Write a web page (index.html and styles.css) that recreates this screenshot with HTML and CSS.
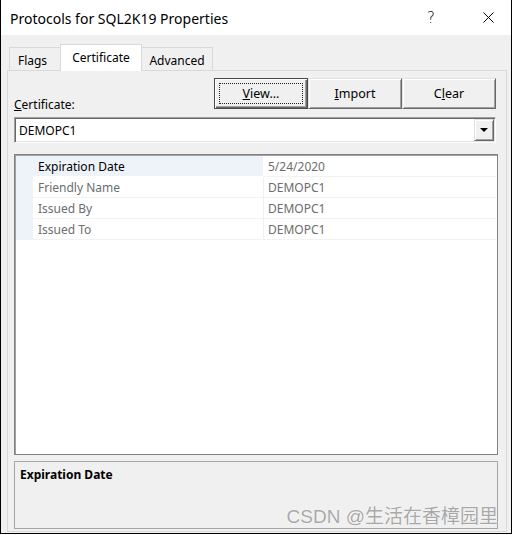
FILE: index.html
```html
<!DOCTYPE html>
<html>
<head>
<meta charset="utf-8">
<title>Protocols for SQL2K19 Properties</title>
<link rel="stylesheet" href="styles.css">
</head>
<body>
<div class="window">
  <div class="titlebar">
    <span class="title">Protocols for SQL2K19 Properties</span>
    <span class="help">?</span>
    <span class="close"><svg width="11" height="11" viewBox="0 0 11 11"><path d="M0.5 0.5L10.5 10.5M10.5 0.5L0.5 10.5" stroke="#000" stroke-width="1" fill="none"/></svg></span>
  </div>
  <div class="client">
    <div class="tabs">
      <div class="tab tab-flags">Flags</div>
      <div class="tab tab-cert active">Certificate</div>
      <div class="tab tab-adv">Advanced</div>
    </div>
    <div class="panel">
      <div class="toprow">
        <span class="label"><u>C</u>ertificate:</span>
        <div class="buttons">
          <div class="btn default"><span class="focus"><u>V</u>iew...</span></div>
          <div class="btn"><u>I</u>mport</div>
          <div class="btn">C<u>l</u>ear</div>
        </div>
      </div>
      <div class="combo">
        <span class="combo-text">DEMOPC1</span>
        <span class="drop"><svg width="8" height="4" viewBox="0 0 8 4"><path d="M0 0H8L4 4Z" fill="#000"/></svg></span>
      </div>
      <div class="list">
        <div class="row sel"><div class="gut"></div><div class="name">Expiration Date</div><div class="val">5/24/2020</div></div>
        <div class="row"><div class="gut"></div><div class="name">Friendly Name</div><div class="val">DEMOPC1</div></div>
        <div class="row"><div class="gut"></div><div class="name">Issued By</div><div class="val">DEMOPC1</div></div>
        <div class="row"><div class="gut"></div><div class="name">Issued To</div><div class="val">DEMOPC1</div></div>
      </div>
      <div class="desc">Expiration Date</div>
    </div>
  </div>
  <div class="watermark">CSDN @生活在香樟园里</div>
</div>
</body>
</html>
```
FILE: styles.css
```css
html, body {
  margin: 0;
  padding: 0;
  background: #ffffff;
}
body {
  font-family: "Noto Sans", "Open Sans", sans-serif;
  font-size: 12px;
  color: #000;
}
.window {
  position: relative;
  width: 512px;
  height: 534px;
  box-sizing: border-box;
  border: 1px solid #000;
  border-top: none;
  display: flex;
  flex-direction: column;
  background: #f0f0f0;
}
.titlebar {
  height: 35px;
  flex: none;
  background: #fff;
  display: flex;
  align-items: center;
}
.title {
  padding-left: 9px;
  font-size: 14px;
  color: #000;
  padding-top: 1px;
}
.help {
  margin-left: auto;
  width: 20px;
  margin-right: 24px;
  text-align: center;
  font-size: 15px;
  font-family: "DejaVu Sans", sans-serif;
  font-weight: 200;
  color: #000;
}
.close {
  width: 46px;
  height: 35px;
  display: flex;
  align-items: center;
  justify-content: center;
}
.client {
  flex: 1;
  padding-top: 9px;
  display: flex;
  flex-direction: column;
}
.tabs {
  display: flex;
  align-items: flex-start;
  height: 27px;
  margin-left: 8px;
  margin-bottom: -1px;
  position: relative;
  z-index: 1;
}
.tab {
  box-sizing: border-box;
  height: 23px;
  margin-top: 3px;
  border: 1px solid #d9d9d9;
  border-bottom: none;
  background: #f0f0f0;
  display: flex;
  align-items: center;
  justify-content: center;
  padding-top: 2px;
}
.tab-flags { width: 52px; padding-right: 5px; }
.tab-cert { width: 82px; margin-left: -1px; }
.tab-adv { width: 72px; margin-left: -1px; }
.tab.active {
  height: 27px;
  margin-top: 0;
  background: #fff;
  position: relative;
  z-index: 2;
  padding-top: 0;
  padding-bottom: 2px;
}
.panel {
  box-sizing: border-box;
  margin-left: 6px;
  width: 500px;
  height: 462px;
  border: 1px solid #d9d9d9;
  background: #f0f0f0;
  padding: 7px 8px 0 6px;
  display: flex;
  flex-direction: column;
}
.toprow {
  display: flex;
  align-items: flex-end;
  height: 31px;
  margin-right: 2px;
}
.label {
  line-height: 15px;
  margin-bottom: -3px;
}
.buttons {
  margin-left: auto;
  display: flex;
}
.btn {
  box-sizing: border-box;
  width: 94px;
  height: 31px;
  background: #f0f0f0;
  border: 1px solid;
  border-color: #e3e3e3 #696969 #696969 #e3e3e3;
  box-shadow: inset 1px 1px 0 #fff, inset -1px -1px 0 #a0a0a0;
  display: flex;
  align-items: center;
  justify-content: center;
  padding-bottom: 1px;
  font-size: 12.5px;
}
.btn.default {
  border: 1px solid #4a4a4a;
  box-shadow: inset 1px 1px 0 #fff, inset -1px -1px 0 #696969, inset -2px -2px 0 #a0a0a0;
  padding: 4px;
}
.focus {
  flex: 1;
  align-self: stretch;
  border: 1px dotted #222;
  display: flex;
  align-items: center;
  justify-content: center;
  padding-bottom: 1px;
}
.combo {
  box-sizing: border-box;
  margin-top: 8px;
  margin-right: 2px;
  height: 26px;
  background: #fff;
  border: 1px solid;
  border-color: #a0a0a0 #fff #fff #a0a0a0;
  box-shadow: inset 1px 1px 0 #696969, inset -1px -1px 0 #e3e3e3;
  padding: 1px;
  display: flex;
  align-items: center;
}
.combo-text {
  padding-left: 3px;
  flex: 1;
}
.drop {
  box-sizing: border-box;
  width: 20px;
  height: 22px;
  background: #f0f0f0;
  border: 1px solid;
  border-color: #e3e3e3 #696969 #696969 #e3e3e3;
  box-shadow: inset 1px 1px 0 #fff, inset -1px -1px 0 #a0a0a0;
  display: flex;
  align-items: center;
  justify-content: center;
}
.list {
  box-sizing: border-box;
  margin-top: 11px;
  height: 301px;
  background: #fff;
  border: 1px solid #828282;
  box-shadow: inset 1px 1px 0 #a0a0a0;
  padding: 1px;
}
.row {
  display: flex;
  height: 21px;
  box-sizing: border-box;
}
.gut {
  width: 17px;
  background: #eef3fa;
}
.name {
  width: 231px;
  padding-left: 5px;
  box-sizing: border-box;
  border-bottom: 1px solid #f2f2f2;
  border-right: 1px solid #f0f0f0;
  color: #6d6d6d;
  display: flex;
  align-items: center;
}
.val {
  flex: 1;
  padding-left: 4px;
  border-bottom: 1px solid #f2f2f2;
  color: #6d6d6d;
  display: flex;
  align-items: center;
}
.row.sel .name {
  background: #eef3fa;
  color: #000;
  border-bottom-color: #fff;
  border-right-color: #fff;
}
.desc {
  box-sizing: border-box;
  margin-top: 6px;
  height: 68px;
  border: 1px solid #a5a5a5;
  background: #f0f0f0;
  padding: 5px 5px;
  font-weight: bold;
  line-height: 16px;
}
.watermark {
  position: absolute;
  right: 13px;
  bottom: 5px;
  font-family: "Liberation Sans", "Noto Sans CJK SC", sans-serif;
  font-size: 19px;
  line-height: 22px;
  color: #a8a8a8;
  text-shadow: 0 0 1px #fff, 0 0 1px #fff;
}
```
